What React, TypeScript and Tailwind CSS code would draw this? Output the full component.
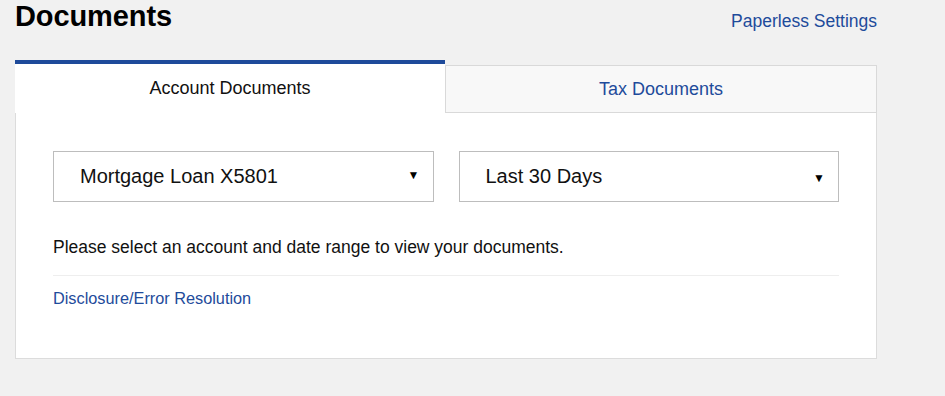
const FONT = "font-['Liberation_Sans',Arial,sans-serif]";

function Select({ label, arrowClass }: { label: string; arrowClass: string }) {
  return (
    <div className="flex-1 h-[51px] border border-[#bdbdbd] bg-white flex items-center justify-between pl-[26px] pr-[13px]">
      <span className="text-[20px] text-[#111] -mt-[2px]">{label}</span>
      <span className={`text-[12px] leading-none text-black ${arrowClass}`}>▼</span>
    </div>
  );
}

export default function App() {
  return (
    <div className={`${FONT} min-h-[396px] w-full bg-[#f1f1f1] pl-[15px]`}>
      <div className="w-[862px]">
        {/* Header */}
        <div className="flex items-start justify-between h-[60px]">
          <h1 className="text-[29px] font-bold text-black leading-none pt-[2px] tracking-[-0.1px]">Documents</h1>
          <a className="text-[17.5px] text-[#1e4b9b] mt-[11px] leading-5">Paperless Settings</a>
        </div>

        {/* Tabs */}
        <div className="flex items-start">
          <div className="w-[430px] h-[53px] bg-white border-t-4 border-[#1e4a9a] flex items-center justify-center">
            <span className="text-[18px] text-[#111]">Account Documents</span>
          </div>
          <div className="flex-1 mt-[5px] h-[48px] bg-[#f8f8f8] border border-[#d9d9d9] flex items-center justify-center pt-[1px]">
            <span className="text-[18px] text-[#1e4b9b]">Tax Documents</span>
          </div>
        </div>

        {/* Panel */}
        <div className="bg-white border border-t-0 border-[#dcdcdc] px-[37px] pt-[38px] h-[246px]">
          <div className="flex gap-[25px]">
            <Select label="Mortgage Loan X5801" arrowClass="-mt-[3px]" />
            <Select label="Last 30 Days" arrowClass="mt-[3px]" />
          </div>
          <p className="mt-[35px] text-[17.5px] text-[#111] leading-5">
            Please select an account and date range to view your documents.
          </p>
          <div className="mt-[18px] border-t border-[#eeeeee]" />
          <a className="block mt-[12px] text-[16.3px] text-[#1e4b9b] leading-5">Disclosure/Error Resolution</a>
        </div>
      </div>
    </div>
  );
}
